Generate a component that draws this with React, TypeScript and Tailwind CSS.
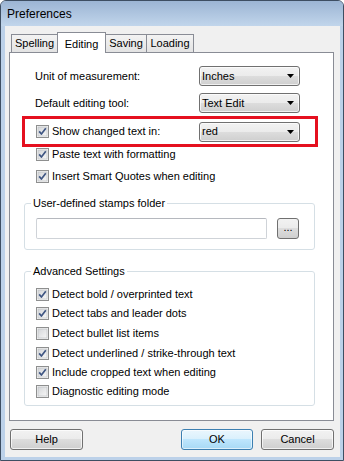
import React, { useId } from "react";

const FONT = "font-['Liberation_Sans',Arial,sans-serif]";

function CheckBox({ checked }: { checked: boolean }) {
  const id = useId().replace(/:/g, "");
  return (
    <svg width="13" height="13" viewBox="0 0 13 13" className="shrink-0 block">
      <defs>
        <linearGradient id={`g${id}`} x1="0" y1="0" x2="1" y2="1">
          <stop offset="0" stopColor="#d4d6d9" />
          <stop offset="1" stopColor="#f7f7f7" />
        </linearGradient>
      </defs>
      <rect x="0.5" y="0.5" width="12" height="12" fill="#f4f4f4" stroke="#8e8f8f" />
      <rect x="2" y="2" width="9" height="9" fill={`url(#g${id})`} stroke="#b9bcc0" strokeWidth="0.6" />
      {checked && (
        <path d="M3.2 6.4 L5.4 9 L9.8 3.2" fill="none" stroke="#3f5683" strokeWidth="1.7" strokeLinejoin="round" />
      )}
    </svg>
  );
}

function Combo({ value }: { value: string }) {
  return (
    <div className="w-[101px] h-[20px] shrink-0 rounded-[3px] border border-[#707070] bg-[linear-gradient(#f2f2f2,#ebebeb_50%,#dddddd_50%,#cfcfcf)] shadow-[inset_0_0_0_1px_rgba(255,255,255,0.7)] flex items-center justify-between pl-[2px] pr-[5px]">
      <span className="text-[11px] leading-none text-black">{value}</span>
      <svg width="7" height="4" viewBox="0 0 7 4" className="block">
        <path d="M0 0 H7 L3.5 4 Z" fill="#000" />
      </svg>
    </div>
  );
}

function Check({ label, checked }: { label: string; checked: boolean }) {
  return (
    <div className="flex items-center h-[13px] gap-[3px]">
      <CheckBox checked={checked} />
      <span className="text-[11px] leading-none text-black whitespace-nowrap">{label}</span>
    </div>
  );
}

function Button({ label, primary, w }: { label: string; primary?: boolean; w: string }) {
  return (
    <div
      className={
        "h-[21px] rounded-[3px] border flex items-center justify-center text-[11px] text-black " +
        w +
        " " +
        (primary
          ? "border-[#3c7fb1] bg-[linear-gradient(#eaf6fd,#d9f0fc_50%,#bee6fd_50%,#a7d9f5)] shadow-[inset_0_0_0_1px_rgba(255,255,255,0.6)]"
          : "border-[#707070] bg-[linear-gradient(#f2f2f2,#ebebeb_50%,#dddddd_50%,#cfcfcf)] shadow-[inset_0_0_0_1px_rgba(255,255,255,0.7)]")
      }
    >
      {label}
    </div>
  );
}

export default function App() {
  return (
    <div className={`${FONT} w-[344px] h-[461px] border border-[#3e4e62] rounded-t-[6px] bg-[#bcd1e9] flex flex-col overflow-hidden`}>
      {/* Title bar */}
      <div className="h-[25px] shrink-0 bg-[linear-gradient(#9cb5d4,#c1d5eb)] flex items-center pl-[6px]">
        <span className="text-[12px] text-black leading-none">Preferences</span>
      </div>
      {/* Client area */}
      <div className="ml-[4px] w-[335px] h-[431px] bg-[#f0f0f0] pt-[6px] pl-[4px] flex flex-col">
        {/* Tabs */}
        <div className="flex items-end h-[20px] pl-[2px]">
          <div className="w-[47px] h-[18px] border border-b-0 border-[#898c95] bg-[linear-gradient(#f3f3f3,#e3e3e3)] flex items-center justify-center text-[11px] text-black">
            Spelling
          </div>
          <div className="relative z-10 -ml-px -mb-px w-[49px] h-[21px] border border-b-0 border-[#898c95] bg-white flex items-start pt-[3px] justify-center text-[11px] text-black">
            Editing
          </div>
          <div className="-ml-px w-[42px] h-[18px] border border-b-0 border-[#898c95] bg-[linear-gradient(#f3f3f3,#e3e3e3)] flex items-center justify-center text-[11px] text-black">
            Saving
          </div>
          <div className="-ml-px w-[48px] h-[18px] border border-b-0 border-[#898c95] bg-[linear-gradient(#f3f3f3,#e3e3e3)] flex items-center justify-center text-[11px] text-black">
            Loading
          </div>
        </div>
        {/* Panel */}
        <div className="w-[325px] h-[369px] border border-[#898c95] bg-white flex flex-col text-[11px] text-black">
          <div className="mt-[13px] ml-[25px] flex items-center h-[20px]">
            <span className="w-[164px] leading-none">Unit of measurement:</span>
            <Combo value="Inches" />
          </div>
          <div className="mt-[7px] ml-[25px] flex items-center h-[20px]">
            <span className="w-[164px] leading-none">Default editing tool:</span>
            <Combo value="Text Edit" />
          </div>
          <div className="mt-[3px] ml-[12px] w-[296px] h-[31px] border-[3px] border-[#e5101f] flex items-center pl-[11px] pr-[15px]">
            <div className="flex items-center gap-[3px] w-[164px]">
              <CheckBox checked />
              <span className="leading-none whitespace-nowrap">Show changed text in:</span>
            </div>
            <Combo value="red" />
          </div>
          <div className="mt-[1px] ml-[26px]">
            <Check label="Paste text with formatting" checked />
          </div>
          <div className="mt-[9px] ml-[26px]">
            <Check label="Insert Smart Quotes when editing" checked />
          </div>

          <fieldset className="mt-[14px] ml-[14px] w-[291px] border border-[#d5dfe5] rounded-[3px] pl-[11px] pb-[10px]">
            <legend className="ml-[-5px] px-[2px] leading-[13px] text-[#000]">User-defined stamps folder</legend>
            <div className="mt-[8px] flex items-center gap-[10px]">
              <div className="w-[231px] h-[21px] border border-[#cfd3d8] border-t-[#b5b8be] rounded-[2px] bg-white" />
              <div className="w-[22px] h-[21px] rounded-[3px] border border-[#707070] bg-[linear-gradient(#f2f2f2,#ebebeb_50%,#dddddd_50%,#cfcfcf)] flex items-center justify-center text-[11px] leading-none pb-[2px]">
                ...
              </div>
            </div>
          </fieldset>

          <fieldset className="mt-[15px] ml-[14px] w-[291px] border border-[#d5dfe5] rounded-[3px] pl-[11px] pb-[7px]">
            <legend className="ml-[-5px] px-[2px] leading-[13px]">Advanced Settings</legend>
            <div className="mt-[10px]">
              <Check label="Detect bold / overprinted text" checked />
            </div>
            <div className="mt-[6px]">
              <Check label="Detect tabs and leader dots" checked />
            </div>
            <div className="mt-[7px]">
              <Check label="Detect bullet list items" checked={false} />
            </div>
            <div className="mt-[7px]">
              <Check label="Detect underlined / strike-through text" checked />
            </div>
            <div className="mt-[6px]">
              <Check label="Include cropped text when editing" checked />
            </div>
            <div className="mt-[6px]">
              <Check label="Diagnostic editing mode" checked={false} />
            </div>
          </fieldset>
        </div>
        {/* Buttons */}
        <div className="mt-[8px] flex items-center ml-[1px] w-[324px]">
          <Button label="Help" w="w-[73px]" />
          <div className="flex-1" />
          <Button label="OK" primary w="w-[72px]" />
          <div className="w-[8px]" />
          <Button label="Cancel" w="w-[73px]" />
        </div>
      </div>
    </div>
  );
}
